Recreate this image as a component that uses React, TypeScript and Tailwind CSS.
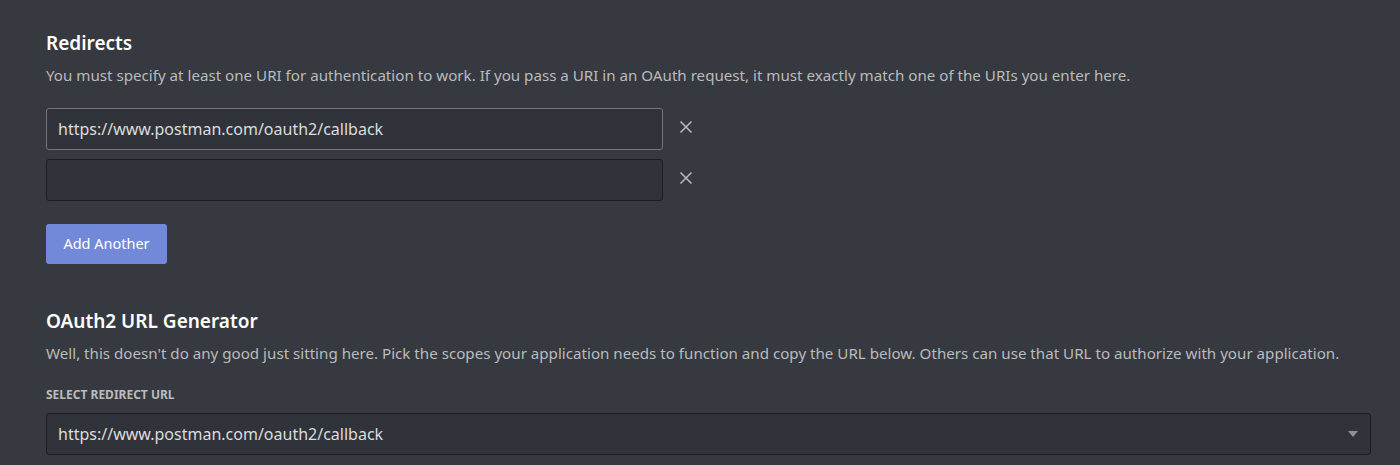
import React from 'react';

const urls = ['https://www.postman.com/oauth2/callback', ''];

const CloseIcon = () => (
  <svg width="14" height="14" viewBox="0 0 14 14" fill="none" className="-translate-y-[2px]">
    <path d="M1.5 1.5L12.5 12.5M12.5 1.5L1.5 12.5" stroke="#b9bbbe" strokeWidth="1.5" />
  </svg>
);

const App = () => {
  return (
    <div
      className="min-h-[465px] w-full bg-[#36393f] pl-[46px] pr-[29px] pt-[31px] text-[#dcddde]"
      style={{ fontFamily: '"Noto Sans", "Open Sans", sans-serif' }}
    >
      <h2 className="text-[19px] font-semibold leading-6 text-white">Redirects</h2>
      <p className="mt-[10px] text-[15.15px] leading-5 text-[#b9bbbe]">
        You must specify at least one URI for authentication to work. If you pass a URI in an OAuth request, it must
        exactly match one of the URIs you enter here.
      </p>

      <div className="mt-[23px] flex flex-col gap-[9px]">
        {urls.map((url, i) => (
          <div key={i} className="flex items-center">
            <div
              className={
                'flex h-[42px] w-[617px] items-center rounded-[3px] border bg-[#303339] px-[11px] text-[16px] text-[#dcddde] ' +
                (i === 0 ? 'border-[#72767d]' : 'border-[#1c1d21]')
              }
            >
              {url}
            </div>
            <button className="ml-[16px] flex h-[42px] w-[14px] items-center justify-center">
              <CloseIcon />
            </button>
          </div>
        ))}
      </div>

      <button className="mt-[23px] h-[40px] w-[121px] rounded-[3px] bg-[#7289da] text-[14.5px] font-normal text-white">
        Add Another
      </button>

      <h2 className="mt-[45px] text-[19px] font-semibold leading-6 text-white">OAuth2 URL Generator</h2>
      <p className="mt-[10px] text-[15.15px] leading-5 text-[#b9bbbe]">
        Well, this doesn't do any good just sitting here. Pick the scopes your application needs to function and copy the
        URL below. Others can use that URL to authorize with your application.
      </p>

      <div className="mt-[24px] text-[12px] font-bold uppercase leading-4 text-[#b9bbbe]">Select Redirect URL</div>
      <div className="mt-[10px] flex h-[42px] items-center justify-between rounded-[3px] border border-[#1c1d21] bg-[#303339] pl-[11px] pr-[12px] text-[16px] text-[#dcddde]">
        <span>https://www.postman.com/oauth2/callback</span>
        <svg width="10" height="6" viewBox="0 0 10 6">
          <path d="M0 0H10L5 6Z" fill="#8e9297" />
        </svg>
      </div>
    </div>
  );
};

export default App;
